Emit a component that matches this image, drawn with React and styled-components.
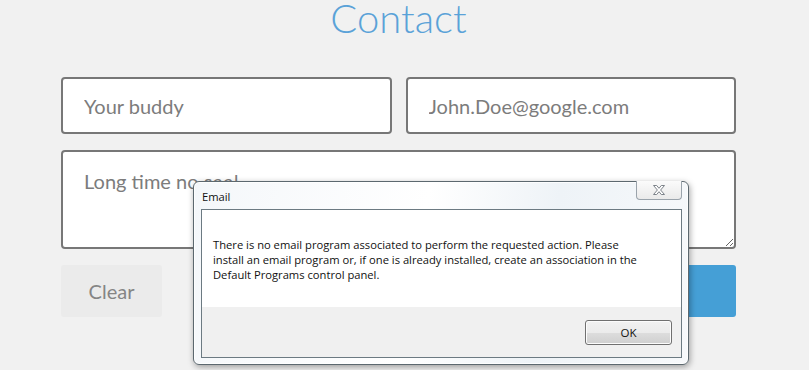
import React from 'react'
import styled, { createGlobalStyle } from 'styled-components'

const GlobalStyle = createGlobalStyle`
  html, body {
    margin: 0;
    padding: 0;
    background: #f1f1f1;
  }
  * { box-sizing: border-box; }
`;

const Page = styled.div`
  position: relative;
  width: 809px;
  height: 370px;
  overflow: hidden;
  padding: 0 73px 0 61px;
  font-family: Lato, "Open Sans", sans-serif;
`;

const Title = styled.h1`
  margin: 0;
  text-align: center;
  font-family: Lato, sans-serif;
  font-weight: 300;
  font-size: 40px;
  line-height: 36px;
  color: #5aa2d8;
`;

const Form = styled.form`
  display: flex;
  flex-direction: column;
  gap: 16px;
  margin-top: 41px;
`;

const Row = styled.div`
  display: flex;
  gap: 14px;
  justify-content: ${p => p.$split ? 'space-between' : 'flex-start'};
`;

const fieldBase = `
  border: 2px solid #777;
  border-radius: 4px;
  background: #fff;
  font-family: Lato, sans-serif;
  font-size: 20px;
  color: #555;
  padding: 0 21px;
  outline: none;
  &::placeholder { color: #7c7c7c; }
`;

const Input = styled.input`
  ${fieldBase}
  flex: 1;
  height: 57px;
  min-width: 0;
`;

const TextArea = styled.textarea`
  ${fieldBase}
  display: block;
  width: 100%;
  height: 99px;
  padding-top: 17px;
  resize: vertical;
`;

const Button = styled.button`
  height: 52px;
  width: ${p => p.$wide ? '150px' : '101px'};
  border: none;
  border-radius: 3px;
  font-family: Lato, sans-serif;
  font-size: 20px;
  background: ${p => p.$primary ? '#459fd6' : '#ebebeb'};
  color: ${p => p.$primary ? '#fff' : '#858585'};
`;

/* Windows 7 style message box laid over the page */
const Dialog = styled.div`
  position: absolute;
  left: 193px;
  top: 181px;
  width: 496px;
  height: 184px;
  border: 1px solid #5c686f;
  border-radius: 6px;
  background: linear-gradient(100deg, #f4f7fa 0%, #ffffff 45%, #eef3f7 70%, #f7f9fb 100%);
  box-shadow: 1px 2px 6px rgba(0, 0, 0, 0.35), inset 0 0 0 1px rgba(255, 255, 255, 0.8);
  font-family: "Open Sans", "Noto Sans", sans-serif;
  font-size: 11.2px;
  color: #111;
  display: flex;
  flex-direction: column;
  padding: 0 6px 6px 7px;
`;

const TitleBar = styled.div`
  height: 27px;
  display: flex;
  align-items: flex-start;
  justify-content: space-between;
`;

const Caption = styled.span`
  padding: 7px 0 0 1px;
`;

const CloseBtn = styled.div`
  width: 46px;
  height: 19px;
  margin-top: -1px;
  border: 1px solid #9aa3ab;
  border-top: none;
  border-radius: 0 0 4px 4px;
  background: linear-gradient(#fbfbfb, #eaeaea);
  display: flex;
  align-items: center;
  justify-content: center;
`;

const Client = styled.div`
  flex: 1;
  border: 1px solid #6c7a82;
  display: flex;
  flex-direction: column;
`;

const Message = styled.div`
  height: 97px;
  background: #fff;
  padding: 27px 11px 0;
  line-height: 15px;
`;

const Footer = styled.div`
  flex: 1;
  background: #f0f0f0;
  display: flex;
  justify-content: flex-end;
  align-items: flex-start;
  padding: 13px 9px 0 0;
`;

const OkButton = styled.button`
  width: 87px;
  height: 25px;
  border: 1px solid #707070;
  border-radius: 3px;
  background: linear-gradient(#f2f2f2 0%, #ebebeb 50%, #dddddd 51%, #cfcfcf 100%);
  box-shadow: inset 0 0 0 1px #fcfcfc;
  font-family: "Open Sans", "Noto Sans", sans-serif;
  font-size: 11.5px;
  color: #111;
`;

const CloseIcon = () => (
  <svg width="14" height="12" viewBox="0 0 14 12">
    <path
      d="M1.5 1.5h3.2l2.3 2.8 2.3-2.8h3.2l-3.9 4.5 3.9 4.5H9.3L7 7.7l-2.3 2.8H1.5l3.9-4.5z"
      fill="#fff"
      stroke="#7d838a"
      strokeWidth="1"
      strokeLinejoin="round"
    />
  </svg>
);

export default function App() {
  return (
    <>
      <GlobalStyle />
      <Page>
        <Title>Contact</Title>
        <Form onSubmit={e => e.preventDefault()}>
          <Row>
            <Input placeholder="Your buddy" />
            <Input placeholder="John.Doe@google.com" />
          </Row>
          <TextArea placeholder="Long time no see!" />
          <Row $split>
            <Button type="reset">Clear</Button>
            <Button $primary $wide type="submit">Send</Button>
          </Row>
        </Form>

        <Dialog>
          <TitleBar>
            <Caption>Email</Caption>
            <CloseBtn><CloseIcon /></CloseBtn>
          </TitleBar>
          <Client>
            <Message>
              There is no email program associated to perform the requested action. Please<br />
              install an email program or, if one is already installed, create an association in the<br />
              Default Programs control panel.
            </Message>
            <Footer>
              <OkButton>OK</OkButton>
            </Footer>
          </Client>
        </Dialog>
      </Page>
    </>
  )
}
